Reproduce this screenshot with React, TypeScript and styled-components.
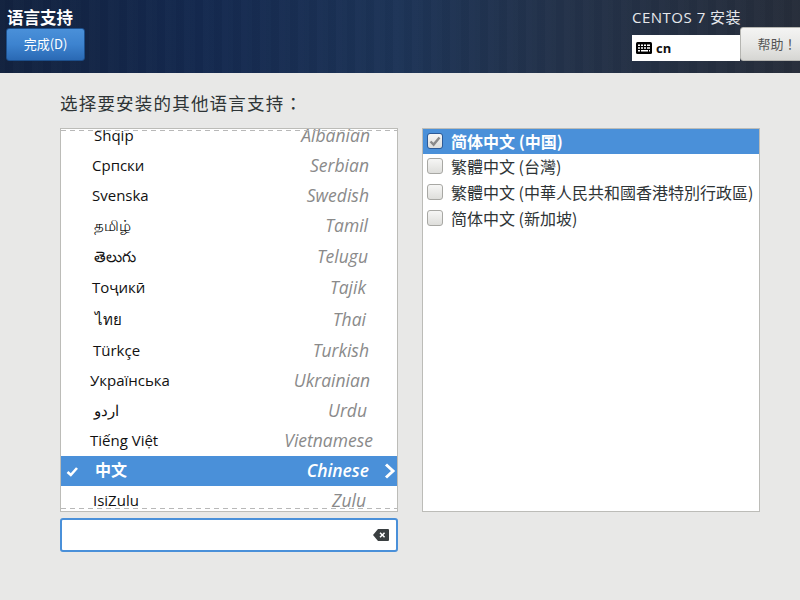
import React from 'react';
import styled, { createGlobalStyle } from 'styled-components';

const latin = `"Open Sans", "Noto Sans", "Noto Sans CJK SC", sans-serif`;
const cjk = `"Noto Sans CJK SC", "Noto Sans", sans-serif`;
const cjkCentredPunct = `"Noto Sans CJK TC", "Noto Sans", sans-serif`;

const GlobalStyle = createGlobalStyle`
  html, body {
    margin: 0;
    padding: 0;
    width: 800px;
    height: 600px;
    overflow: hidden;
    background: #e8e8e7;
    font-family: ${latin};
  }
`;

const Page = styled.div`
  display: flex;
  flex-direction: column;
  width: 800px;
  height: 600px;
  overflow: hidden;
`;

const Header = styled.header`
  display: flex;
  justify-content: space-between;
  height: 73px;
  flex: none;
  background:
    repeating-linear-gradient(90deg, rgba(255, 255, 255, 0.008) 0 5px, rgba(0, 0, 0, 0.018) 5px 13px, rgba(255, 255, 255, 0.012) 13px 19px),
    linear-gradient(90deg, #12223f 0%, #14294f 25%, #1d3457 50%, #23324a 70%, #262d3a 100%);
`;

const HeaderLeft = styled.div`
  display: flex;
  flex-direction: column;
  align-items: flex-start;
  padding: 6px 0 0 6px;
`;

const ScreenTitle = styled.h1`
  margin: 0 0 0 1px;
  height: 22px;
  font: 700 16.5px/22px ${cjk};
  color: #fff;
`;

const DoneButton = styled.button`
  width: 79px;
  height: 33px;
  padding: 0 0 2px;
  border: 1px solid #1c4f8c;
  border-radius: 3px;
  background: linear-gradient(180deg, #4a90d9 0%, #3d83cf 50%, #2a69b4 100%);
  color: #fff;
  font: 400 13px/1 ${cjk};
`;

const HeaderRight = styled.div`
  display: flex;
  flex-direction: column;
  width: 168px;
`;

const ProductName = styled.div`
  height: 27px;
  padding-top: 7px;
  box-sizing: border-box;
  font: 400 15px/20px ${latin};
  letter-spacing: 0.5px;
  color: #e6e8ec;
  white-space: nowrap;
`;

const HeaderControls = styled.div`
  display: flex;
  align-items: flex-end;
  height: 34px;
`;

const LayoutBox = styled.div`
  display: flex;
  flex: none;
  align-items: center;
  gap: 4px;
  width: 108px;
  height: 26px;
  padding-left: 4px;
  box-sizing: border-box;
  background: #fff;
  color: #111;
  font: 700 13px/1 "Open Sans", sans-serif;
`;

const HelpButton = styled.button`
  flex: none;
  width: 70px;
  height: 34px;
  padding: 0 0 2px 4px;
  border: 1px solid #b5b5b1;
  border-radius: 3px 0 0 3px;
  background: linear-gradient(180deg, #f4f4f3 0%, #e8e8e6 50%, #d6d6d3 100%);
  color: #555;
  font: 400 13px/1 ${cjkCentredPunct};
`;

const Main = styled.main`
  display: flex;
  flex-direction: column;
  padding: 0 40px 0 60px;
`;

const Prompt = styled.h2`
  margin: 0;
  height: 55px;
  padding-top: 17px;
  box-sizing: border-box;
  font: 400 17.5px/25px ${cjkCentredPunct};
  letter-spacing: 1.2px;
  color: #2e3436;
`;

const Columns = styled.div`
  display: grid;
  grid-template-columns: 338px 338px;
  column-gap: 24px;
`;

const LeftColumn = styled.div`
  display: flex;
  flex-direction: column;
  gap: 6px;
`;

const ListFrame = styled.div`
  position: relative;
  height: 384px;
  box-sizing: border-box;
  border: 1px solid #bcbcb8;
  background: #fff;
  overflow: hidden;
`;

const ScrollEdge = styled.div<{ $bottom?: boolean }>`
  position: absolute;
  left: 0;
  right: 0;
  ${(p) => (p.$bottom ? 'bottom: 2px;' : 'top: 1px;')}
  height: 1px;
  background: repeating-linear-gradient(90deg, #b8b8b8 0 5px, transparent 5px 9px);
`;

const LanguageRows = styled.ul`
  list-style: none;
  margin: -8px 0 0;
  padding: 0;
`;

const LanguageRow = styled.li<{ $height: number; $left: number; $right: number; $selected?: boolean }>`
  position: relative;
  display: flex;
  align-items: center;
  justify-content: space-between;
  height: ${(p) => p.$height}px;
  box-sizing: border-box;
  padding: 0 ${(p) => p.$right}px 2px ${(p) => p.$left}px;
  background: ${(p) => (p.$selected ? '#4a90d9' : 'transparent')};
  color: ${(p) => (p.$selected ? '#fff' : '#111')};
`;

const NativeName = styled.span<{ $selected?: boolean }>`
  font: ${(p) => (p.$selected ? '700 16px' : '400 15px')}/20px ${latin};
`;

const EnglishName = styled.span<{ $selected?: boolean }>`
  font: italic ${(p) => (p.$selected ? 600 : 400)} 17.5px/22px ${latin};
  color: ${(p) => (p.$selected ? '#fff' : '#8a8a8a')};
`;

const RowCheck = styled.svg`
  position: absolute;
  left: 5px;
  top: 10px;
`;

const RowArrow = styled.svg`
  position: absolute;
  right: 1px;
  top: 7px;
`;

const SearchBox = styled.div`
  display: flex;
  align-items: center;
  justify-content: flex-end;
  height: 34px;
  padding-right: 7px;
  box-sizing: border-box;
  border: 2px solid #4a90d9;
  border-radius: 3px;
  background: #fff;
`;

const LocaleList = styled.ul`
  list-style: none;
  margin: 0;
  padding: 0;
  height: 384px;
  box-sizing: border-box;
  border: 1px solid #bcbcb8;
  background: #fff;
`;

const LocaleRow = styled.li<{ $selected?: boolean }>`
  display: flex;
  align-items: center;
  gap: 8px;
  height: ${(p) => (p.$selected ? 25 : 26)}px;
  padding: 0 0 ${(p) => (p.$selected ? 1 : 3)}px 4px;
  box-sizing: border-box;
  background: ${(p) => (p.$selected ? '#4a90d9' : 'transparent')};
  color: ${(p) => (p.$selected ? '#fff' : '#2e3436')};
  font: ${(p) => (p.$selected ? 700 : 400)} 16px/20px ${cjk};
  white-space: nowrap;
`;

const Checkbox = styled.span<{ $checked?: boolean }>`
  display: flex;
  align-items: center;
  justify-content: center;
  flex: none;
  width: 16px;
  height: 16px;
  box-sizing: border-box;
  border: 1px solid ${(p) => (p.$checked ? '#2d5a96' : '#a8a8a4')};
  border-radius: 3px;
  background: linear-gradient(180deg, #f6f6f5 0%, #dededb 100%);
`;

const languages = [
  { native: 'Shqip', english: 'Albanian', height: 30, left: 33, right: 27 },
  { native: 'Српски', english: 'Serbian', height: 30, left: 31, right: 28 },
  { native: 'Svenska', english: 'Swedish', height: 30, left: 31, right: 28 },
  { native: 'தமிழ்', english: 'Tamil', height: 30, left: 33, right: 29 },
  { native: 'తెలుగు', english: 'Telugu', height: 31, left: 33, right: 29 },
  { native: 'Тоҷикӣ', english: 'Tajik', height: 32, left: 31, right: 31 },
  { native: 'ไทย', english: 'Thai', height: 32, left: 34, right: 31 },
  { native: 'Türkçe', english: 'Turkish', height: 30, left: 32, right: 28 },
  { native: 'Українська', english: 'Ukrainian', height: 30, left: 29, right: 27 },
  { native: 'اردو', english: 'Urdu', height: 30, left: 33, right: 30 },
  { native: 'Tiếng Việt', english: 'Vietnamese', height: 30, left: 29, right: 24 },
  { native: '中文', english: 'Chinese', height: 30, left: 34, right: 28, selected: true },
  { native: 'IsiZulu', english: 'Zulu', height: 30, left: 32, right: 31 },
];

const locales = [
  { label: '简体中文 (中国)', selected: true },
  { label: '繁體中文 (台灣)' },
  { label: '繁體中文 (中華人民共和國香港特別行政區)' },
  { label: '简体中文 (新加坡)' },
];

const KeyboardIcon = () => (
  <svg width="16" height="12" viewBox="0 0 16 12">
    <rect width="16" height="12" rx="1.5" fill="#000" />
    <path
      d="M2 2.5h2v1.5H2zM5 2.5h2v1.5H5zM8 2.5h2v1.5H8zM11 2.5h3v1.5h-3zM2 5.2h2v1.5H2zM5 5.2h2v1.5H5zM8 5.2h2v1.5H8zM11 5.2h3v1.5h-3zM2 8h2v1.5H2zM5 8h7v1.5H5zM13 8h1v1.5h-1z"
      fill="#fff"
    />
  </svg>
);

const ClearIcon = () => (
  <svg width="16" height="12" viewBox="0 0 16 12">
    <path
      d="M5 0h10a1 1 0 0 1 1 1v10a1 1 0 0 1-1 1H5L0 6zM7.6 3.2 6.5 4.3 8.2 6 6.5 7.7l1.1 1.1 1.7-1.7L11 8.8l1.1-1.1L10.4 6l1.7-1.7L11 3.2 9.3 4.9z"
      fill="#3a3f41"
      fillRule="evenodd"
    />
  </svg>
);

const App = () => {
  return (
    <Page>
      <GlobalStyle />
      <Header>
        <HeaderLeft>
          <ScreenTitle>语言支持</ScreenTitle>
          <DoneButton>完成(D)</DoneButton>
        </HeaderLeft>
        <HeaderRight>
          <ProductName>CENTOS 7 安装</ProductName>
          <HeaderControls>
            <LayoutBox>
              <KeyboardIcon />
              cn
            </LayoutBox>
            <HelpButton>帮助！</HelpButton>
          </HeaderControls>
        </HeaderRight>
      </Header>
      <Main>
        <Prompt>选择要安装的其他语言支持：</Prompt>
        <Columns>
          <LeftColumn>
            <ListFrame>
              <LanguageRows>
                {languages.map((lang) => (
                  <LanguageRow
                    key={lang.english}
                    $height={lang.height}
                    $left={lang.left}
                    $right={lang.right}
                    $selected={lang.selected}
                  >
                    {lang.selected && (
                      <RowCheck width="13" height="11" viewBox="0 0 13 11">
                        <path d="M1.5 6 4.8 9 11 2" fill="none" stroke="#fff" strokeWidth="2.6" />
                      </RowCheck>
                    )}
                    <NativeName $selected={lang.selected}>{lang.native}</NativeName>
                    <EnglishName $selected={lang.selected}>{lang.english}</EnglishName>
                    {lang.selected && (
                      <RowArrow width="12" height="16" viewBox="0 0 12 16">
                        <path d="M2 1.5 9 8l-7 6.5" fill="none" stroke="#fff" strokeWidth="3" />
                      </RowArrow>
                    )}
                  </LanguageRow>
                ))}
              </LanguageRows>
              <ScrollEdge />
              <ScrollEdge $bottom />
            </ListFrame>
            <SearchBox>
              <ClearIcon />
            </SearchBox>
          </LeftColumn>
          <LocaleList>
            {locales.map((locale) => (
              <LocaleRow key={locale.label} $selected={locale.selected}>
                <Checkbox $checked={locale.selected}>
                  {locale.selected && (
                    <svg width="12" height="11" viewBox="0 0 12 11">
                      <path d="M1.5 5.5 4.6 8.6 10.5 1.5" fill="none" stroke="#8a8a8a" strokeWidth="2.4" />
                    </svg>
                  )}
                </Checkbox>
                {locale.label}
              </LocaleRow>
            ))}
          </LocaleList>
        </Columns>
      </Main>
    </Page>
  );
};

export default App;
